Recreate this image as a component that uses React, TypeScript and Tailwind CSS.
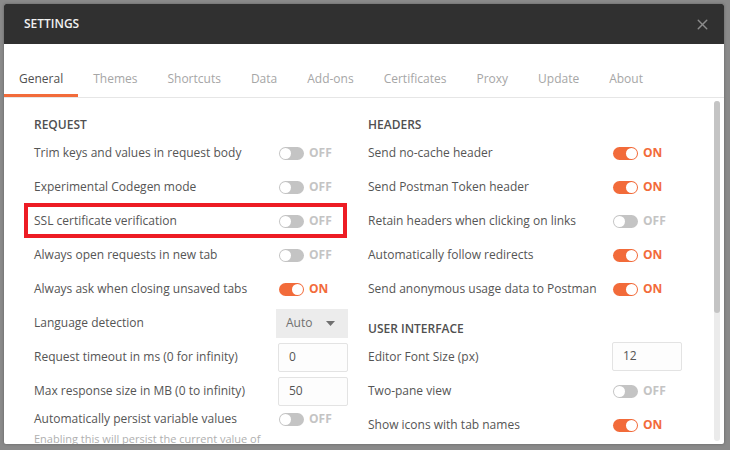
import { X } from "lucide-react";

const tabs = ["General", "Themes", "Shortcuts", "Data", "Add-ons", "Certificates", "Proxy", "Update", "About"];

function Toggle({ on }: { on: boolean }) {
  return (
    <div className="flex items-center gap-[5px]">
      <div
        className={`relative h-[13px] w-[25px] rounded-full ${on ? "bg-[#f26b3a]" : "bg-[#c4c4c4]"}`}
      >
        <div
          className={`absolute top-[1px] h-[11px] w-[11px] rounded-full bg-white ${on ? "right-[1px]" : "left-[1px]"}`}
        />
      </div>
      <span className={`text-[12px] font-bold ${on ? "text-[#f26b3a]" : "text-[#c4c4c4]"}`}>
        {on ? "ON" : "OFF"}
      </span>
    </div>
  );
}

function Row({ label, children, h = "h-[34px]" }: { label: string; children?: React.ReactNode; h?: string }) {
  return (
    <div className={`flex items-center ${h}`}>
      <div className="w-[245px] shrink-0">{label}</div>
      {children}
    </div>
  );
}

function Heading({ children, className = "" }: { children: React.ReactNode; className?: string }) {
  return <div className={`flex h-[22px] items-center font-semibold text-[#505050] ${className}`}>{children}</div>;
}

function NumInput({ value }: { value: string }) {
  return (
    <div className="flex h-[29px] w-[70px] items-center rounded-[2px] border border-[#e3e3e3] bg-[#fdfdfd] pl-[10px]">
      {value}
    </div>
  );
}

export default function App() {
  return (
    <div
      className="relative h-[450px] w-[730px] overflow-hidden bg-[#8a8a8a] pl-[4px] pt-[4px] text-[12px] text-[#555]"
      style={{ fontFamily: '"Open Sans", "Liberation Sans", sans-serif' }}
    >
      <div className="flex h-[440px] w-[720px] flex-col overflow-hidden rounded-[2px] bg-white shadow-[0_0_3px_rgba(0,0,0,0.3)]">
        <div className="flex h-[40px] shrink-0 items-center justify-between bg-[#303030] pl-[20px] pr-[13px]">
          <span className="text-[12px] font-semibold text-[#f0f0f0]">SETTINGS</span>
          <X size={17} strokeWidth={2} className="text-[#8c8c8c]" />
        </div>

        <div className="flex h-[54px] shrink-0 items-end border-b border-[#e6e6e6]">
          {tabs.map((t, i) => (
            <div
              key={t}
              className={`px-[15px] pb-[6px] leading-[18px] border-b-[3px] ${
                i === 0 ? "border-[#f26b3a] text-[#505050]" : "border-transparent text-[#a6a6a6]"
              }`}
            >
              {t}
            </div>
          ))}
        </div>

        <div className="relative flex flex-1 overflow-hidden pl-[30px] pt-[16px]">
          <div className="w-[334px] shrink-0">
            <Heading>REQUEST</Heading>
            <Row label="Trim keys and values in request body"><Toggle on={false} /></Row>
            <Row label="Experimental Codegen mode"><Toggle on={false} /></Row>
            <div className="relative">
              <Row label="SSL certificate verification"><Toggle on={false} /></Row>
              <div className="absolute left-[-10px] top-[-1px] h-[35px] w-[323px] border-[4px] border-[#ed1c24]" />
            </div>
            <Row label="Always open requests in new tab"><Toggle on={false} /></Row>
            <Row label="Always ask when closing unsaved tabs"><Toggle on /></Row>
            <Row label="Language detection">
              <div className="ml-[-3px] flex h-[29px] w-[72px] items-center justify-between bg-[#ececec] pl-[10px] pr-[13px] text-[#707070]">
                <span>Auto</span>
                <svg width="9" height="5" viewBox="0 0 9 5"><path d="M0 0h9L4.5 5z" fill="#707070" /></svg>
              </div>
            </Row>
            <Row label="Request timeout in ms (0 for infinity)">
              <div className="ml-[-1px]"><NumInput value="0" /></div>
            </Row>
            <Row label="Max response size in MB (0 to infinity)">
              <div className="ml-[-1px]"><NumInput value="50" /></div>
            </Row>
            <Row label="Automatically persist variable values" h="h-[22px]"><Toggle on={false} /></Row>
            <div className="mt-[1px] text-[11px] text-[#b0b0b0]">Enabling this will persist the current value of</div>
          </div>

          <div className="w-[334px] shrink-0">
            <Heading>HEADERS</Heading>
            <Row label="Send no-cache header"><Toggle on /></Row>
            <Row label="Send Postman Token header"><Toggle on /></Row>
            <Row label="Retain headers when clicking on links"><Toggle on={false} /></Row>
            <Row label="Automatically follow redirects"><Toggle on /></Row>
            <Row label="Send anonymous usage data to Postman"><Toggle on /></Row>
            <Heading className="mt-[12px]">USER INTERFACE</Heading>
            <Row label="Editor Font Size (px)">
              <div className="ml-[-1px] mt-[-2px]"><NumInput value="12" /></div>
            </Row>
            <Row label="Two-pane view"><Toggle on={false} /></Row>
            <Row label="Show icons with tab names"><Toggle on /></Row>
          </div>

          <div className="absolute right-[4px] top-[3px] bottom-[3px] w-[6px] rounded-full bg-[#ebebeb]">
            <div className="h-[212px] w-full rounded-full bg-[#c4c4c4]" />
          </div>
        </div>
      </div>
    </div>
  );
}
